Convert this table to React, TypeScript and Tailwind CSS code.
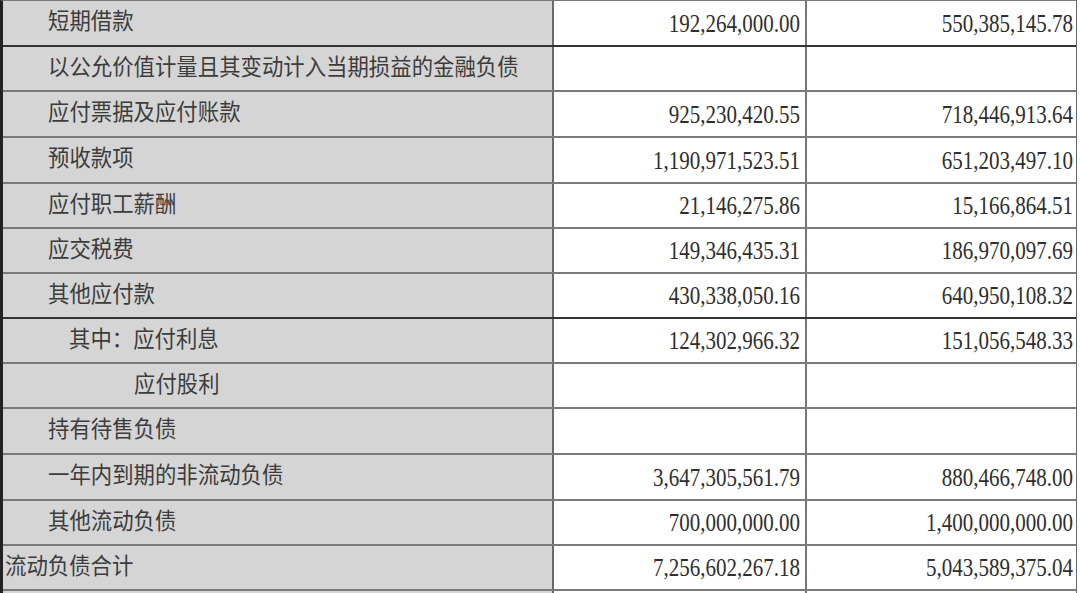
import React from "react";

type Row = {
  label: string;
  indent: number;
  a: string;
  b: string;
  h: number;
  thick?: boolean;
};

const rows: Row[] = [
  { label: "短期借款", indent: 48, a: "192,264,000.00", b: "550,385,145.78", h: 46, thick: true },
  { label: "以公允价值计量且其变动计入当期损益的金融负债", indent: 48, a: "", b: "", h: 45 },
  { label: "应付票据及应付账款", indent: 48, a: "925,230,420.55", b: "718,446,913.64", h: 46 },
  { label: "预收款项", indent: 48, a: "1,190,971,523.51", b: "651,203,497.10", h: 46 },
  { label: "应付职工薪酬", indent: 48, a: "21,146,275.86", b: "15,166,864.51", h: 45 },
  { label: "应交税费", indent: 48, a: "149,346,435.31", b: "186,970,097.69", h: 45 },
  { label: "其他应付款", indent: 48, a: "430,338,050.16", b: "640,950,108.32", h: 45, thick: true },
  { label: "其中：应付利息", indent: 69, a: "124,302,966.32", b: "151,056,548.33", h: 45 },
  { label: "应付股利", indent: 134, a: "", b: "", h: 45 },
  { label: "持有待售负债", indent: 48, a: "", b: "", h: 46 },
  { label: "一年内到期的非流动负债", indent: 48, a: "3,647,305,561.79", b: "880,466,748.00", h: 46 },
  { label: "其他流动负债", indent: 48, a: "700,000,000.00", b: "1,400,000,000.00", h: 45 },
  { label: "流动负债合计", indent: 5, a: "7,256,602,267.18", b: "5,043,589,375.04", h: 45 },
  { label: "", indent: 5, a: "", b: "", h: 45 },
];

export default function App() {
  return (
    <div className="w-[1080px] h-[593px] overflow-hidden bg-white">
      <div className="w-[1077px] border-t border-t-[#777] border-l-[3px] border-l-[#222] border-r border-r-[#666]">
        {rows.map((r, i) => (
          <div
            key={i}
            className={`flex ${r.thick ? "border-b-2 border-b-[#333]" : "border-b-2 border-b-[#7a7a7a]"}`}
            style={{ height: r.h }}
          >
            <div
              className="w-[551px] shrink-0 bg-[#d5d5d5] border-r-2 border-r-[#6a6a6a] flex items-center text-[21.4px] text-[#3c3c3c] leading-none"
              style={{ paddingLeft: r.indent - 3, fontFamily: '"Liberation Serif", "Noto Sans CJK SC", serif' }}
            >
              <span className="scale-y-[1.05] whitespace-nowrap">{r.label}</span>
            </div>
            <div
              className="w-[253px] shrink-0 border-r-2 border-r-[#777] flex items-center justify-end pr-[5px] pt-[2px] text-[21px] text-[#2e2e2e] leading-none"
              style={{ fontFamily: '"Liberation Serif", serif' }}
            >
              <span className="scale-y-[1.15] inline-block">{r.a}</span>
            </div>
            <div
              className="flex-1 flex items-center justify-end pr-[3px] pt-[2px] text-[21px] text-[#2e2e2e] leading-none"
              style={{ fontFamily: '"Liberation Serif", serif' }}
            >
              <span className="scale-y-[1.15] inline-block">{r.b}</span>
            </div>
          </div>
        ))}
      </div>
    </div>
  );
}
